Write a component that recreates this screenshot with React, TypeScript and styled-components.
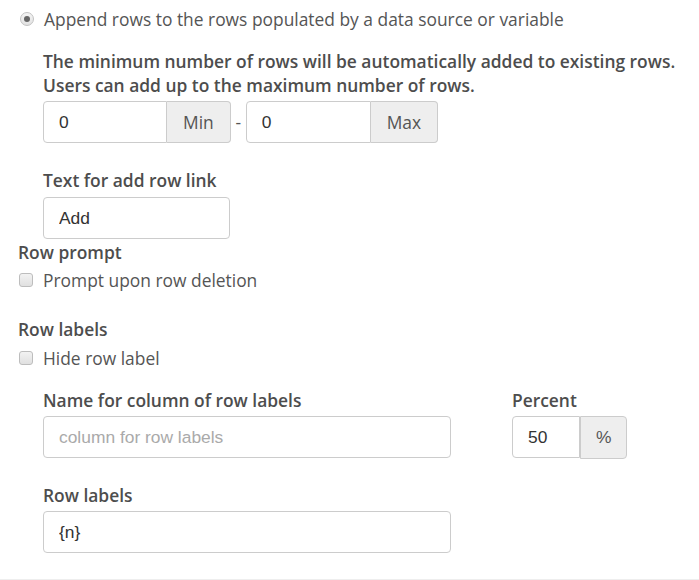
import React from "react";
import styled, { createGlobalStyle } from "styled-components";

const Global = createGlobalStyle`
  html, body { margin: 0; padding: 0; background: #fff; }
  body { font-family: "Open Sans", "Liberation Sans", sans-serif; font-size: 17.4px; color: #555; }
  * { box-sizing: border-box; }
`;

const Page = styled.div`
  width: 699px;
  height: 580px;
  padding: 7px 0 0 18px;
  border-bottom: 1px solid #eee;
  display: flex;
  flex-direction: column;
`;

const Indent = styled.div`
  padding-left: 25px;
  display: flex;
  flex-direction: column;
`;

const OptionRow = styled.label<{ $mt?: number }>`
  display: flex;
  align-items: center;
  height: 24px;
  line-height: 24px;
  margin-top: ${(p) => p.$mt ?? 0}px;
  color: #555;
  font-size: 17.4px;
  white-space: nowrap;
`;

const Radio = styled.span`
  width: 14px;
  height: 14px;
  border-radius: 50%;
  border: 1px solid #c2c2c2;
  background: linear-gradient(#f4f4f4, #e2e2e2);
  margin: 0 10px 0 2px;
  display: flex;
  align-items: center;
  justify-content: center;
  &::after {
    content: "";
    width: 6px;
    height: 6px;
    border-radius: 50%;
    background: #666;
  }
`;

const Check = styled.span`
  width: 14px;
  height: 14px;
  border-radius: 3px;
  border: 1px solid #bdbdbd;
  background: linear-gradient(#f2f2f2, #e0e0e0);
  margin: 0 10px 0 1px;
`;

const Para = styled.p`
  margin: 18px 0 0;
  font-weight: 600;
  line-height: 24px;
  color: #4d4d4d;
  font-size: 17.4px;
  white-space: nowrap;
`;

const Label = styled.div<{ $mt?: number }>`
  font-weight: 600;
  line-height: 24px;
  height: 24px;
  color: #4d4d4d;
  font-size: 17.4px;
  white-space: nowrap;
  margin-top: ${(p) => p.$mt ?? 0}px;
`;

const Row = styled.div<{ $mt?: number; $top?: boolean }>`
  display: flex;
  align-items: ${(p) => (p.$top ? "flex-start" : "center")};
  margin-top: ${(p) => p.$mt ?? 0}px;
`;

const Group = styled.div`
  display: flex;
  height: 42px;
`;

const Input = styled.input<{ $w: number; $grouped?: boolean }>`
  width: ${(p) => p.$w}px;
  height: 42px;
  border: 1px solid #ccc;
  border-radius: ${(p) => (p.$grouped ? "4px 0 0 4px" : "4px")};
  padding: 0 15px;
  font-family: "Liberation Sans", Arial, sans-serif;
  font-size: 17.4px;
  color: #333;
  background: #fff;
  outline: none;
  &::placeholder { color: #aaa; }
`;

const Addon = styled.span`
  height: 42px;
  display: flex;
  align-items: center;
  padding: 0 16px;
  border: 1px solid #ccc;
  border-left: none;
  border-radius: 0 4px 4px 0;
  background: #eee;
  font-size: 17.4px;
  color: #555;
`;

const PctAddon = styled(Addon)`
  font-family: "Liberation Sans", Arial, sans-serif;
  height: 43px;
  padding: 0 15px;
  border-left: 1px solid #ccc;
`;

const Dash = styled.span`
  width: 15px;
  text-align: center;
  color: #555;
`;

const Col = styled.div<{ $w?: number }>`
  display: flex;
  flex-direction: column;
  width: ${(p) => (p.$w ? `${p.$w}px` : "auto")};
`;

export default function App() {
  return (
    <>
      <Global />
      <Page>
        <OptionRow>
          <Radio />
          Append rows to the rows populated by a data source or variable
        </OptionRow>
        <Indent>
          <Para>
            The minimum number of rows will be automatically added to existing rows.
            <br />
            Users can add up to the maximum number of rows.
          </Para>
          <Row $mt={4}>
            <Group>
              <Input $w={124} $grouped defaultValue="0" />
              <Addon>Min</Addon>
            </Group>
            <Dash>-</Dash>
            <Group>
              <Input $w={125} $grouped defaultValue="0" />
              <Addon>Max</Addon>
            </Group>
          </Row>
          <Label $mt={25}>Text for add row link</Label>
          <Row $mt={5}>
            <Input $w={187} defaultValue="Add" />
          </Row>
        </Indent>
        <Label $mt={1}>Row prompt</Label>
        <OptionRow $mt={4}>
          <Check />
          Prompt upon row deletion
        </OptionRow>
        <Label $mt={25}>Row labels</Label>
        <OptionRow $mt={5}>
          <Check />
          Hide row label
        </OptionRow>
        <Indent>
          <Row $mt={18} $top>
            <Col $w={469}>
              <Label>Name for column of row labels</Label>
              <Row $mt={4}>
                <Input $w={408} placeholder="column for row labels" />
              </Row>
            </Col>
            <Col>
              <Label>Percent</Label>
              <Row $mt={4}>
                <Group>
                  <Input $w={68} $grouped defaultValue="50" />
                  <PctAddon>%</PctAddon>
                </Group>
              </Row>
            </Col>
          </Row>
          <Label $mt={25}>Row labels</Label>
          <Row $mt={4}>
            <Input $w={408} defaultValue="{n}" />
          </Row>
        </Indent>
      </Page>
    </>
  );
}
